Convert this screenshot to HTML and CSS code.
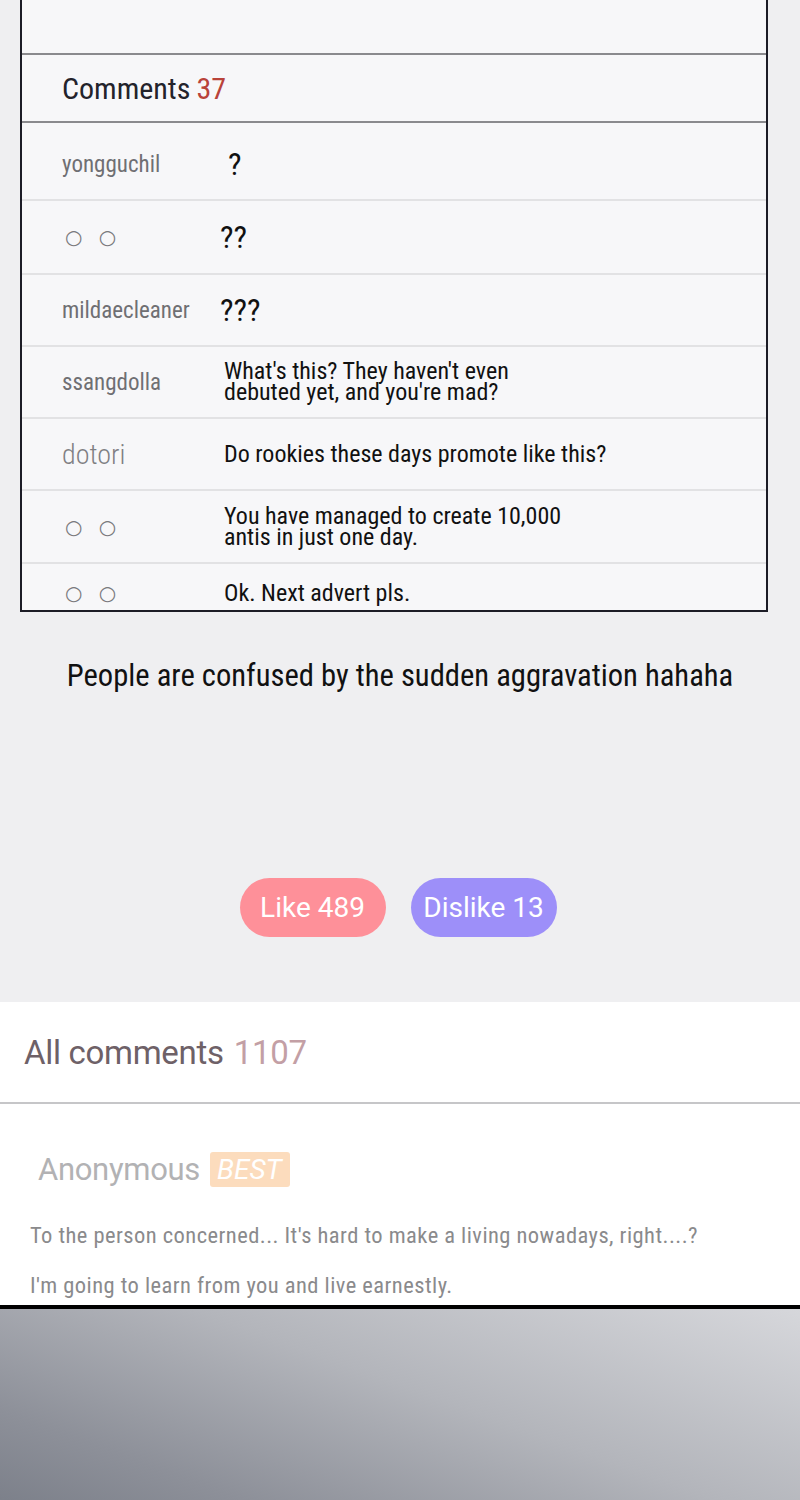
FILE: index.html
```html
<!DOCTYPE html>
<html>
<head>
    <meta charset="utf-8">
    <title>Comments</title>
    <link rel="stylesheet" href="styles.css">
</head>
<body>
    <div class="board">
        <div class="board-top"></div>
        <div class="board-head">Comments <span class="count">37</span></div>
        <div class="board-list">
            <div class="row first">
                <div class="who">yongguchil</div>
                <div class="what big">?</div>
            </div>
            <div class="row second">
                <div class="who dots">○ ○</div>
                <div class="what big">??</div>
            </div>
            <div class="row">
                <div class="who">mildaecleaner</div>
                <div class="what big">???</div>
            </div>
            <div class="row">
                <div class="who">ssangdolla</div>
                <div class="what">What's this? They haven't even<br>debuted yet, and you're mad?</div>
            </div>
            <div class="row">
                <div class="who light">dotori</div>
                <div class="what">Do rookies these days promote like this?</div>
            </div>
            <div class="row tall">
                <div class="who dots">○ ○</div>
                <div class="what">You have managed to create 10,000<br>antis in just one day.</div>
            </div>
            <div class="row last">
                <div class="who dots">○ ○</div>
                <div class="what">Ok. Next advert pls.</div>
            </div>
        </div>
    </div>

    <p class="caption">People are confused by the sudden aggravation hahaha</p>

    <div class="votes">
        <button class="vote like">Like 489</button>
        <button class="vote dislike">Dislike 13</button>
    </div>

    <div class="all">
        <div class="all-head">All comments <span class="all-count">1107</span></div>
        <div class="best">
            <div class="best-name">Anonymous <span class="badge">BEST</span></div>
            <p class="best-text">To the person concerned... It's hard to make a living nowadays, right....?</p>
            <p class="best-text">I'm going to learn from you and live earnestly.</p>
        </div>
    </div>

    <div class="panel"></div>
</body>
</html>
```

FILE: styles.css
```css
body {
    margin: 0;
    background-color: #efeff1;
    font-family: Roboto, "DejaVu Sans", sans-serif;
    font-stretch: 75%;
    color: #111;
}

/* comment board card */
.board {
    margin: 0 32px 0 20px;
    background-color: #f7f7f9;
    border: 2px solid #1c1c26;
    border-top: none;
}
.board-top {
    height: 53px;
    border-bottom: 2px solid #8a8a8e;
}
.board-head {
    height: 66px;
    display: flex;
    align-items: center;
    padding-left: 40px;
    font-size: 30px;
    color: #23232b;
    border-bottom: 2px solid #8a8a8e;
}
.count {
    margin-left: 6px;
    color: #b9433a;
}
.board-list {
    height: 487px;
    overflow: hidden;
}
.row {
    display: grid;
    grid-template-columns: 162px 1fr;
    align-items: center;
    padding-left: 40px;
    height: 70px;
    border-bottom: 2px solid #e2e2e4;
}
.row.first {
    height: 70px;
    padding-top: 6px;
}
.row.first .what {
    margin-left: 4px;
}
.row.second {
    height: 72px;
}
.row.tall {
    height: 71px;
}
.row.last {
    height: 58px;
    border-bottom: none;
}
.who {
    font-size: 23px;
    color: #6f6f73;
}
.who.light {
    font-size: 28px;
    font-weight: 300;
    color: #7f7f83;
}
.who.dots {
    font-family: "DejaVu Sans", sans-serif;
    font-stretch: normal;
    font-size: 20px;
    letter-spacing: 5px;
    padding-left: 3px;
    color: #7a7a7e;
}
.what {
    font-size: 24px;
    line-height: 21px;
    color: #111;
}
.what.big {
    font-size: 32px;
    margin-left: -4px;
}

.caption {
    margin: 46px 0 0;
    text-align: center;
    font-size: 30.6px;
    line-height: 36px;
    color: #111;
}

/* like / dislike */
.votes {
    display: flex;
    justify-content: center;
    gap: 25px;
    margin-top: 184px;
    padding-right: 4px;
}
.vote {
    width: 146px;
    height: 59px;
    border: none;
    border-radius: 30px;
    font-family: Roboto, sans-serif;
    font-stretch: normal;
    font-size: 28px;
    color: #fff;
}
.like {
    background-color: #fe9099;
}
.dislike {
    background-color: #9d8ff9;
}

/* all comments */
.all {
    margin-top: 65px;
    background-color: #fff;
    padding-bottom: 7px;
}
.all-head {
    height: 100px;
    display: flex;
    align-items: center;
    padding-left: 24px;
    font-stretch: normal;
    font-size: 33px;
    letter-spacing: -0.3px;
    color: #6e6167;
    border-bottom: 2px solid #c6c6c8;
}
.all-count {
    margin-left: 10px;
    color: #c39fa5;
}
.best {
    padding: 45px 0 0 30px;
}
.best-name {
    display: flex;
    align-items: center;
    height: 40px;
    padding-left: 8px;
    font-stretch: normal;
    font-size: 31px;
    letter-spacing: -0.3px;
    color: #b2b2b4;
}
.badge {
    margin-left: 10px;
    padding: 0 8px 0 7px;
    height: 35px;
    line-height: 35px;
    background-color: #fcdcbd;
    border-radius: 3px;
    font-style: italic;
    font-size: 28px;
    letter-spacing: 0;
    color: #fff;
}
.best-text {
    margin: 33px 0 0;
    font-size: 22.5px;
    letter-spacing: 0.45px;
    line-height: 26px;
    color: #8a8a8c;
}
.best-text + .best-text {
    margin-top: 24px;
}

/* picture strip below */
.panel {
    height: 200px;
    border-top: 4px solid #000;
    background: linear-gradient(200deg, #d6d7db 0%, #b3b5bb 45%, #8d9099 80%, #7b7f89 100%);
}
```
